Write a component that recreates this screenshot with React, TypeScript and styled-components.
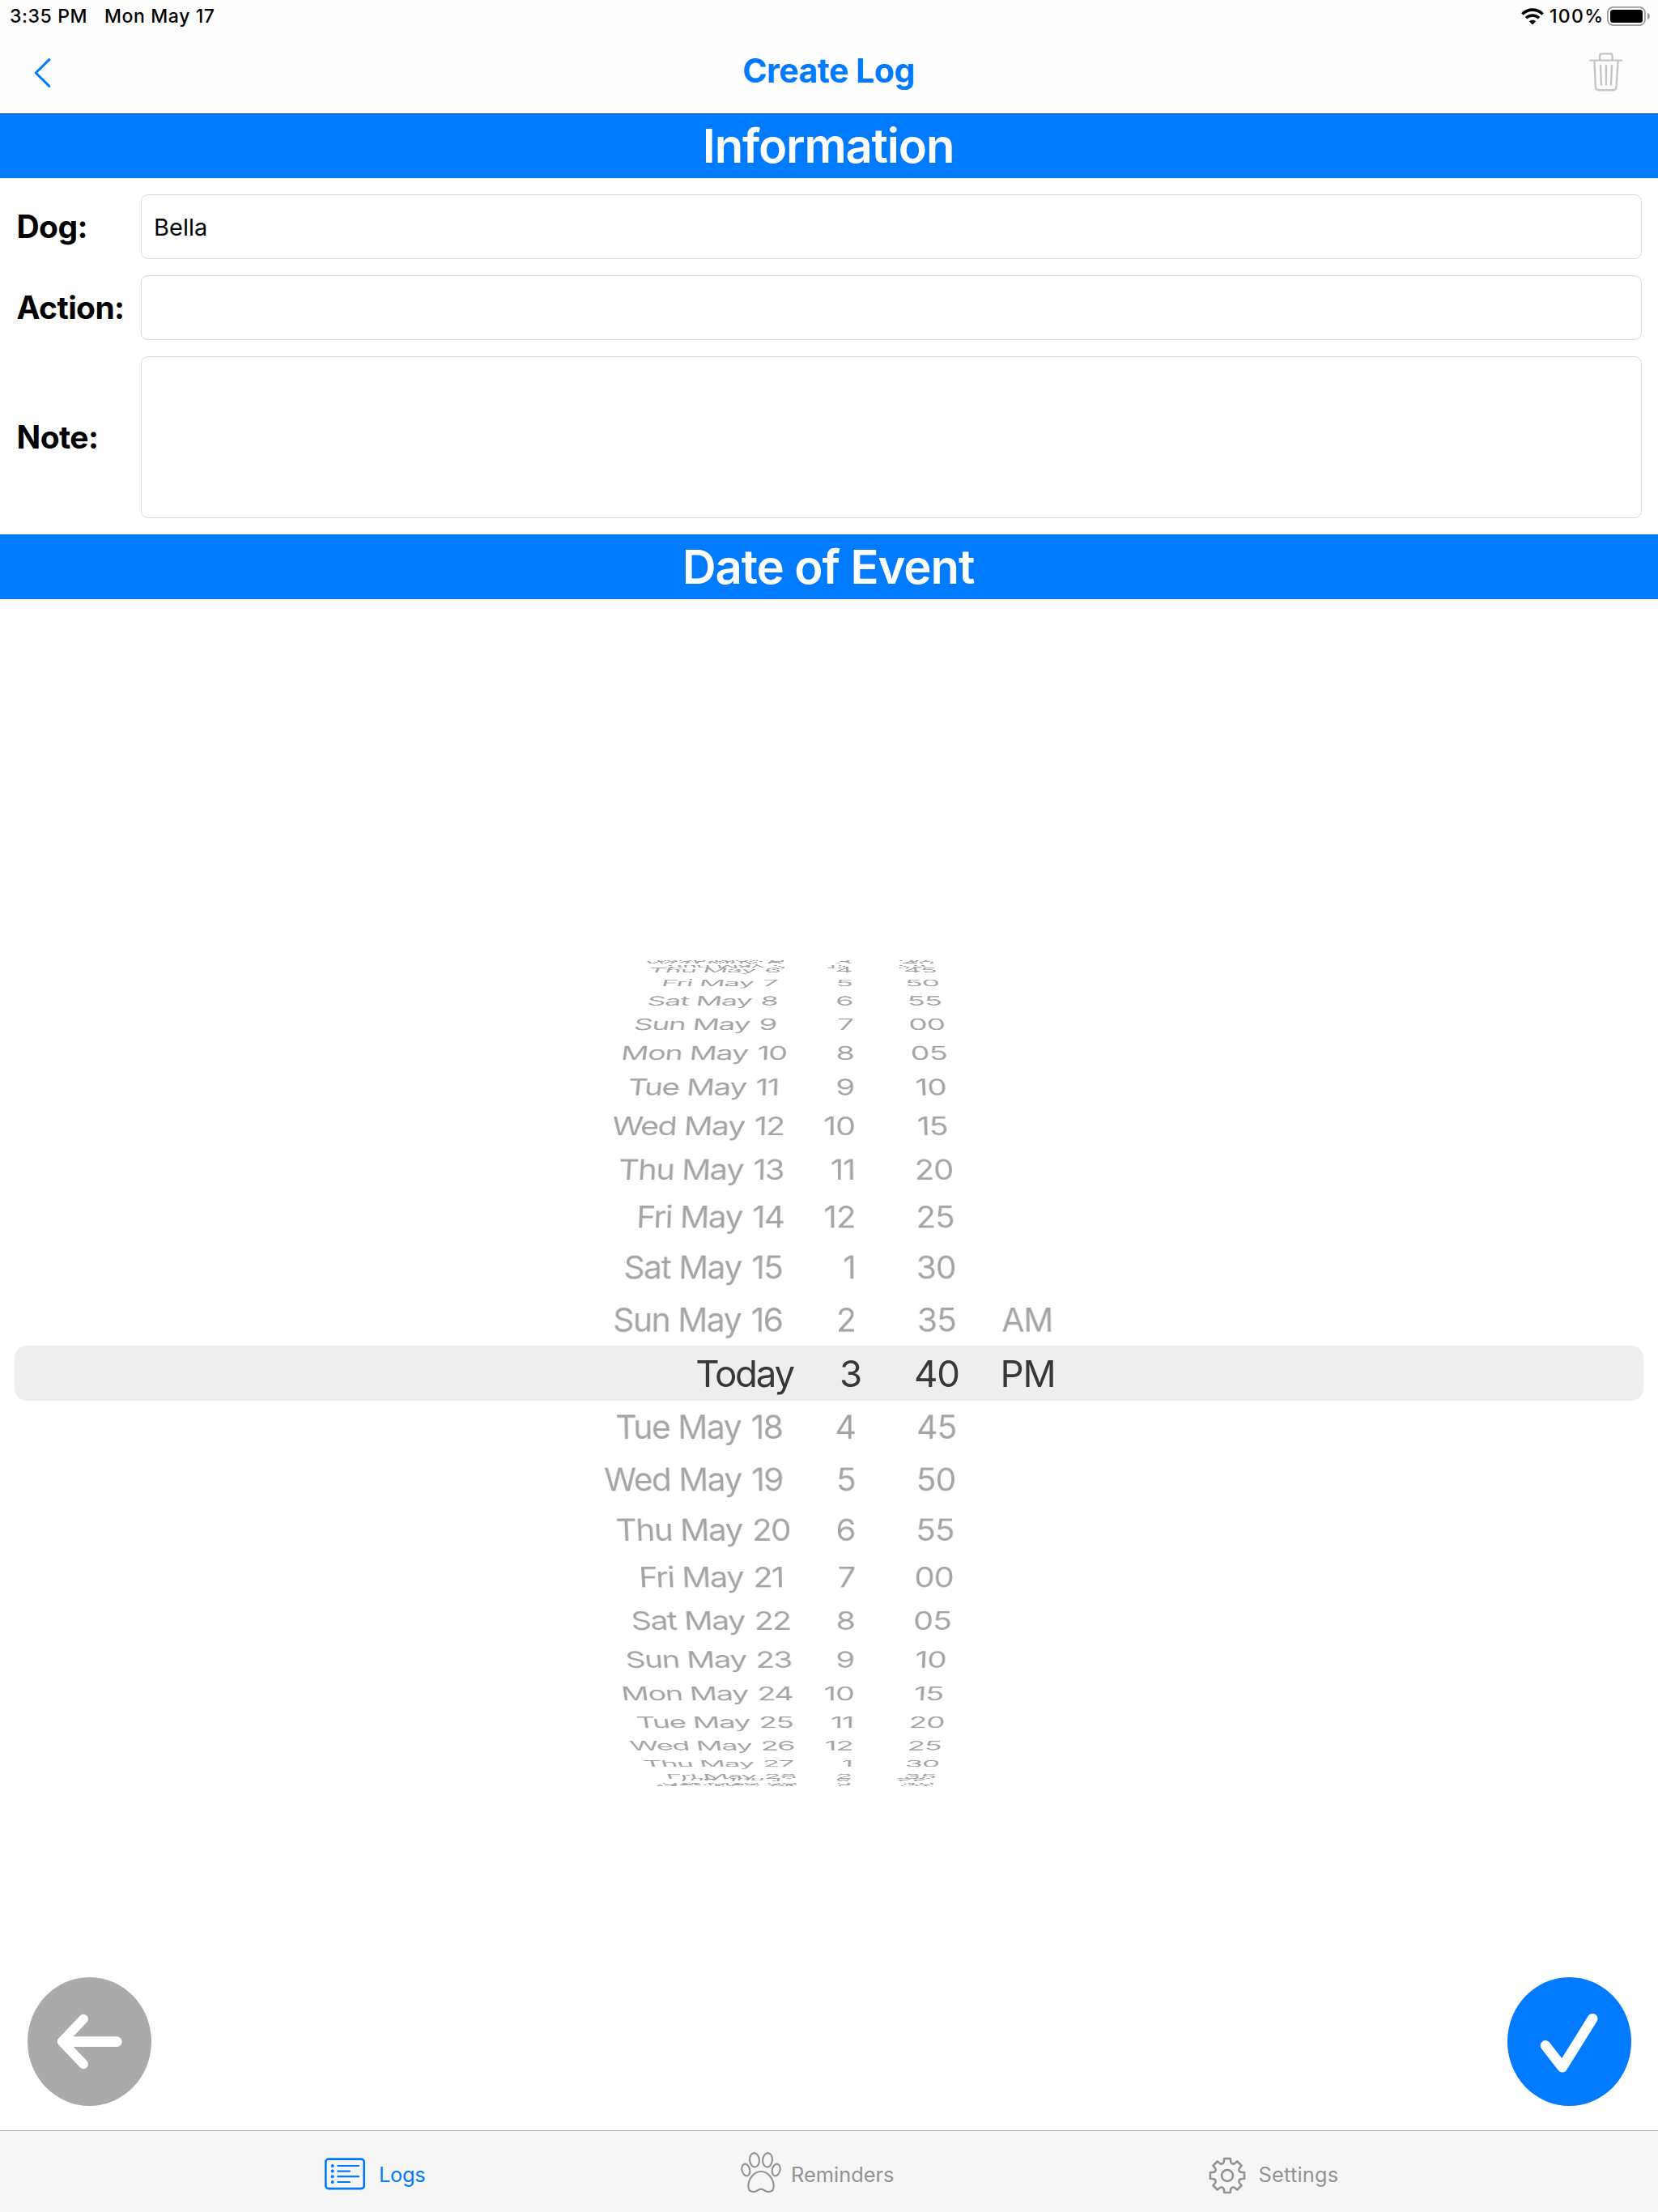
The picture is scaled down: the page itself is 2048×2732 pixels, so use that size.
import React from "react";
import styled, { createGlobalStyle } from "styled-components";

const BLUE = "#007aff";
const GREY = "#929292";

const GlobalStyle = createGlobalStyle`
  html, body { margin: 0; padding: 0; background: #fff; }
  * { box-sizing: border-box; }
`;

const Screen = styled.div`
  width: 2048px;
  height: 2732px;
  display: flex;
  flex-direction: column;
  background: #fff;
  color: #000;
  font-family: Inter, "Liberation Sans", sans-serif;
  font-kerning: normal;
  overflow: hidden;
`;

const StatusBar = styled.div`
  height: 40px;
  display: flex;
  align-items: center;
  padding: 0 10px 0 12px;
  background: #fdfdfd;
  font-size: 23px;
  font-weight: 500;
  line-height: 40px;
  white-space: nowrap;
`;

const StatusText = styled.span<{ $width?: number; $spacing?: number }>`
  width: ${(p) => (p.$width ? `${p.$width}px` : "auto")};
  letter-spacing: ${(p) => p.$spacing ?? 0.6}px;
`;

const StatusIcons = styled.div`
  margin-left: auto;
  display: flex;
  align-items: center;
  gap: 7px;
`;

const NavBar = styled.header`
  height: 100px;
  display: grid;
  grid-template-columns: 1fr auto 1fr;
  align-items: center;
  padding: 0 43px 6px 42px;
  background: #fdfdfd;
`;

const NavTitle = styled.h1`
  margin: 0;
  font-size: 41px;
  line-height: 60px;
  font-weight: 700;
  letter-spacing: -0.5px;
  color: ${BLUE};
`;

const IconButton = styled.button<{ $end?: boolean }>`
  justify-self: ${(p) => (p.$end ? "end" : "start")};
  display: flex;
  padding: ${(p) => (p.$end ? 3 : 6)}px 0 0;
  border: 0;
  background: none;
`;

const SectionBar = styled.h2<{ $ruled?: boolean; $spacing: number }>`
  margin: 0;
  height: 80px;
  flex: none;
  display: flex;
  align-items: center;
  justify-content: center;
  padding-right: 2px;
  background: ${BLUE};
  box-shadow: ${(p) => (p.$ruled ? "inset 0 1px 0 #0055b2" : "none")};
  color: #fff;
  font-size: 58px;
  line-height: 80px;
  font-weight: 600;
  letter-spacing: ${(p) => p.$spacing}px;
`;

const Form = styled.section`
  display: flex;
  flex-direction: column;
  gap: 20px;
  padding: 20px;
`;

const FormRow = styled.div`
  display: grid;
  grid-template-columns: 154px 1fr;
  align-items: center;
`;

const Label = styled.span`
  padding-left: 0.5px;
  font-size: 39px;
  font-weight: 700;
  letter-spacing: -0.6px;
  line-height: 60px;
`;

const Field = styled.div<{ $tall?: boolean }>`
  height: ${(p) => (p.$tall ? 200 : 80)}px;
  display: flex;
  align-items: center;
  padding: 0 15px;
  border: 1px solid #d9d9da;
  border-radius: 9px;
  font-size: 29px;
`;

const PickerSection = styled.section`
  flex: 1;
  display: grid;
  align-items: center;
  padding-top: 210px;
`;

const SelectionBand = styled.div`
  grid-area: 1 / 1;
  height: 68px;
  margin: 0 18px;
  border-radius: 15px;
  background: #eeeeee;
`;

const Drum = styled.div`
  grid-area: 1 / 1;
  height: 68px;
  display: grid;
  perspective: 1861px;
  perspective-origin: 1030px 50%;
`;

const WheelRow = styled.div<{ $selected?: boolean }>`
  grid-area: 1 / 1;
  height: 68px;
  display: grid;
  grid-template-columns: 915px 67px 75px 23px 154px 4px 1fr;
  line-height: ${(p) => (p.$selected ? 70 : 68)}px;
  white-space: nowrap;
  font-size: ${(p) => (p.$selected ? 45.6 : 41)}px;
  letter-spacing: ${(p) => (p.$selected ? -1.2 : -1)}px;
  color: ${(p) => (p.$selected ? "#383838" : "#a4a4a4")};
`;

const DayName = styled.span`
  grid-column: 1;
  text-align: right;
  letter-spacing: -1.5px;
`;

const TodayLabel = styled.span`
  grid-column: 1 / 3;
  padding-right: 2px;
  text-align: right;
  letter-spacing: -2.2px;
`;

const DayNumber = styled.span`
  grid-column: 2;
  padding-left: 12.5px;
  letter-spacing: -1.8px;
`;

const Hour = styled.span<{ $shift?: boolean }>`
  grid-column: 3;
  text-align: right;
  margin-right: ${(p) => (p.$shift ? -7 : 0)}px;
`;

const Minute = styled.span`
  grid-column: 5;
  text-align: center;
`;

const Period = styled.span<{ $shift?: boolean }>`
  grid-column: 7;
  margin-left: ${(p) => (p.$shift ? -2.5 : -0.5)}px;
`;

const Actions = styled.div`
  display: flex;
  justify-content: space-between;
  padding: 0 33px 30px 34px;
`;

const RoundButton = styled.button<{ $color: string }>`
  width: 153px;
  height: 159px;
  padding: 0;
  border: 0;
  border-radius: 50%;
  display: flex;
  background: ${(p) => p.$color};
`;

const TabBar = styled.nav`
  height: 101px;
  flex: none;
  display: flex;
  padding-left: 401px;
  border-top: 1px solid #b1b3b3;
  background: #f6f6f6;
`;

const Tab = styled.div<{ $width: number; $active?: boolean }>`
  width: ${(p) => p.$width}px;
  height: 106px;
  display: flex;
  align-items: center;
  color: ${(p) => (p.$active ? BLUE : GREY)};
`;

const TabIcon = styled.span<{ $raise?: number; $drop?: number }>`
  display: flex;
  padding-bottom: ${(p) => p.$raise ?? 0}px;
  padding-top: ${(p) => p.$drop ?? 0}px;
`;

const TabLabel = styled.span<{ $gap: number; $spacing: number }>`
  margin-left: ${(p) => p.$gap}px;
  font-size: 25.4px;
  letter-spacing: ${(p) => p.$spacing}px;
`;

const Wifi = () => (
  <svg width="28" height="21" viewBox="0 0 28 21" fill="none" stroke="#000">
    <path d="M1.4 7.4C8.5 0.3 19.5 0.3 26.6 7.4" strokeWidth="3.6" />
    <path d="M6 12.3C10.6 7.8 17.4 7.8 22 12.3" strokeWidth="3.6" />
    <path d="M14 20.4L9.8 16.3C12.2 14.2 15.8 14.2 18.2 16.3Z" fill="#000" stroke="none" />
  </svg>
);

const Battery = () => (
  <svg width="53" height="24" viewBox="0 0 53 24">
    <rect x="0.9" y="0.9" width="46" height="22.2" rx="6.6" fill="none" stroke="#9b9b9b" strokeWidth="1.8" />
    <rect x="4" y="4" width="40" height="16" rx="3.6" fill="#000" />
    <path d="M50 7.6C53.8 9 53.8 15 50 16.4Z" fill="#9b9b9b" />
  </svg>
);

const Chevron = () => (
  <svg width="22" height="38" viewBox="0 0 22 38" fill="none" stroke={BLUE} strokeWidth="3" strokeLinecap="round" strokeLinejoin="round">
    <path d="M18.8 2.6L2.2 19L18.8 35.4" />
  </svg>
);

const Trash = () => (
  <svg width="42" height="48" viewBox="0 0 42 48" fill="none" stroke="#c5c5c5" strokeWidth="2.4" strokeLinecap="round" strokeLinejoin="round">
    <path d="M1.3 9.6H40" />
    <path d="M13 9V4.6Q13 1.4 16.2 1.4H25.4Q28.6 1.4 28.6 4.6V9" />
    <path d="M6.4 10L7.9 42.2Q8.1 46.2 12 46.2H29.4Q33.3 46.2 33.5 42.2L35.6 10" />
    <path d="M14 16L14.9 39.6M20.9 16V39.6M28 16L27 39.6" />
  </svg>
);

const ArrowLeft = () => (
  <svg width="153" height="159" viewBox="0 0 153 159" fill="none" stroke="#fff" strokeLinecap="round" strokeLinejoin="round">
    <path d="M69.2 51.6L42.6 79.6L69.2 107.4" strokeWidth="11.6" />
    <path d="M44 79.6H110.4" strokeWidth="12.6" />
  </svg>
);

const Check = () => (
  <svg width="153" height="159" viewBox="0 0 153 159" fill="none" stroke="#fff" strokeWidth="12.6" strokeLinecap="round" strokeLinejoin="round">
    <path d="M47 84.4L67.8 111.2L105.2 51.2" />
  </svg>
);

const ListIcon = () => (
  <svg width="50" height="40" viewBox="0 0 50 40" fill="none" stroke="currentColor">
    <rect x="1.3" y="1.6" width="47.4" height="36.6" rx="3.6" strokeWidth="2.7" />
    {[10, 16.6, 23.2, 30].map((y, i) => (
      <g key={y}>
        <circle cx="9.7" cy={y} r="2" fill="currentColor" stroke="none" />
        <path d={`M16.3 ${y}H${i % 2 ? 31 : 42}`} strokeWidth="2.2" strokeLinecap="round" />
      </g>
    ))}
  </svg>
);

const Paw = () => (
  <svg width="50" height="50" viewBox="0 0 50 50" fill="none" stroke="currentColor" strokeWidth="2.1">
    <ellipse cx="17" cy="9.8" rx="5.9" ry="8.7" transform="rotate(-5 17 9.8)" />
    <ellipse cx="33" cy="9.8" rx="5.9" ry="8.7" transform="rotate(5 33 9.8)" />
    <ellipse cx="6.3" cy="22" rx="4.8" ry="7.5" transform="rotate(-14 6.3 22)" />
    <ellipse cx="43.7" cy="22" rx="4.8" ry="7.5" transform="rotate(14 43.7 22)" />
    <path d="M25 24C16 24 9.3 33.6 9.3 42C9.3 46.6 11.8 49 15.6 49C20.6 49 21.4 45.6 25 45.6C28.6 45.6 29.4 49 34.4 49C38.2 49 40.7 46.6 40.7 42C40.7 33.6 34 24 25 24Z" />
  </svg>
);

const gearPath = (() => {
  const at = (radius: number, deg: number) => {
    const a = ((deg - 90) * Math.PI) / 180;
    return `${(23 + radius * Math.cos(a)).toFixed(2)} ${(23 + radius * Math.sin(a)).toFixed(2)}`;
  };
  let d = "";
  for (let i = 0; i < 8; i++) {
    const c = i * 45;
    d += `${i ? "L" : "M"}${at(21.4, c - 10)}L${at(21.4, c + 10)}L${at(17.2, c + 14.5)}Q${at(14.6, c + 22.5)} ${at(17.2, c + 30.5)}`;
  }
  return `${d}Z`;
})();

const Gear = () => (
  <svg width="46" height="46" viewBox="0 0 46 46" fill="none" stroke="currentColor" strokeWidth="2.6" strokeLinejoin="round">
    <path d={gearPath} />
    <circle cx="23" cy="23" r="7" />
  </svg>
);

const STEP_DEG = 5.68;
const RADIUS = 670;
const REACH = 15;
// The row at this distance from the centre lies edge-on to the viewer.
const EDGE_ON = 13;
const WEEKDAYS = ["Sun", "Mon", "Tue", "Wed", "Thu", "Fri", "Sat"];

const rows = Array.from({ length: REACH * 2 + 1 }, (_, i) => {
  const offset = i - REACH;
  const date = new Date(2021, 4, 17 + offset);
  const minute = (((40 + offset * 5) % 60) + 60) % 60;
  return {
    offset,
    name: `${WEEKDAYS[date.getDay()]} ${date.getMonth() === 4 ? "May" : "Jun"}`,
    day: date.getDate(),
    hour: ((((3 + offset - 1) % 12) + 12) % 12) + 1,
    minute: String(minute).padStart(2, "0"),
    period: offset === -1 ? "AM" : offset === 0 ? "PM" : "",
  };
}).filter((row) => Math.abs(row.offset) !== EDGE_ON);

const DatePicker = () => (
  <PickerSection>
    <SelectionBand />
    <Drum>
      {rows.map((row) => {
        const selected = row.offset === 0;
        return (
          <WheelRow
            key={row.offset}
            $selected={selected}
            style={
              selected
                ? undefined
                : {
                    transformOrigin: "1030px 50%",
                    transform: `translateZ(${-RADIUS}px) rotateX(${-row.offset * STEP_DEG}deg) translateZ(${RADIUS}px)`,
                  }
            }
          >
            {selected ? (
              <TodayLabel>Today</TodayLabel>
            ) : (
              <>
                <DayName>{row.name}</DayName>
                <DayNumber>{row.day}</DayNumber>
              </>
            )}
            <Hour $shift={selected}>{row.hour}</Hour>
            <Minute>{row.minute}</Minute>
            {row.period && <Period $shift={selected}>{row.period}</Period>}
          </WheelRow>
        );
      })}
    </Drum>
  </PickerSection>
);

export default function App() {
  return (
    <Screen>
      <GlobalStyle />
      <StatusBar>
        <StatusText $width={117}>3:35 PM</StatusText>
        <StatusText>Mon May 17</StatusText>
        <StatusIcons>
          <Wifi />
          <StatusText $width={64} $spacing={1.3}>100%</StatusText>
          <Battery />
        </StatusIcons>
      </StatusBar>
      <NavBar>
        <IconButton aria-label="Back">
          <Chevron />
        </IconButton>
        <NavTitle>Create Log</NavTitle>
        <IconButton $end aria-label="Delete">
          <Trash />
        </IconButton>
      </NavBar>
      <SectionBar $ruled $spacing={-1.2}>Information</SectionBar>
      <Form>
        <FormRow>
          <Label>Dog:</Label>
          <Field>Bella</Field>
        </FormRow>
        <FormRow>
          <Label>Action:</Label>
          <Field />
        </FormRow>
        <FormRow>
          <Label>Note:</Label>
          <Field $tall />
        </FormRow>
      </Form>
      <SectionBar $spacing={-1.1}>Date of Event</SectionBar>
      <DatePicker />
      <Actions>
        <RoundButton $color="#aaaaaa" aria-label="Cancel">
          <ArrowLeft />
        </RoundButton>
        <RoundButton $color={BLUE} aria-label="Save">
          <Check />
        </RoundButton>
      </Actions>
      <TabBar>
        <Tab $width={514} $active>
          <TabIcon>
            <ListIcon />
          </TabIcon>
          <TabLabel $gap={17} $spacing={-0.3}>Logs</TabLabel>
        </Tab>
        <Tab $width={577.5}>
          <TabIcon $raise={4}>
            <Paw />
          </TabIcon>
          <TabLabel $gap={12} $spacing={0}>Reminders</TabLabel>
        </Tab>
        <Tab $width={300}>
          <TabIcon $drop={4}>
            <Gear />
          </TabIcon>
          <TabLabel $gap={16} $spacing={0.2}>Settings</TabLabel>
        </Tab>
      </TabBar>
    </Screen>
  );
}
